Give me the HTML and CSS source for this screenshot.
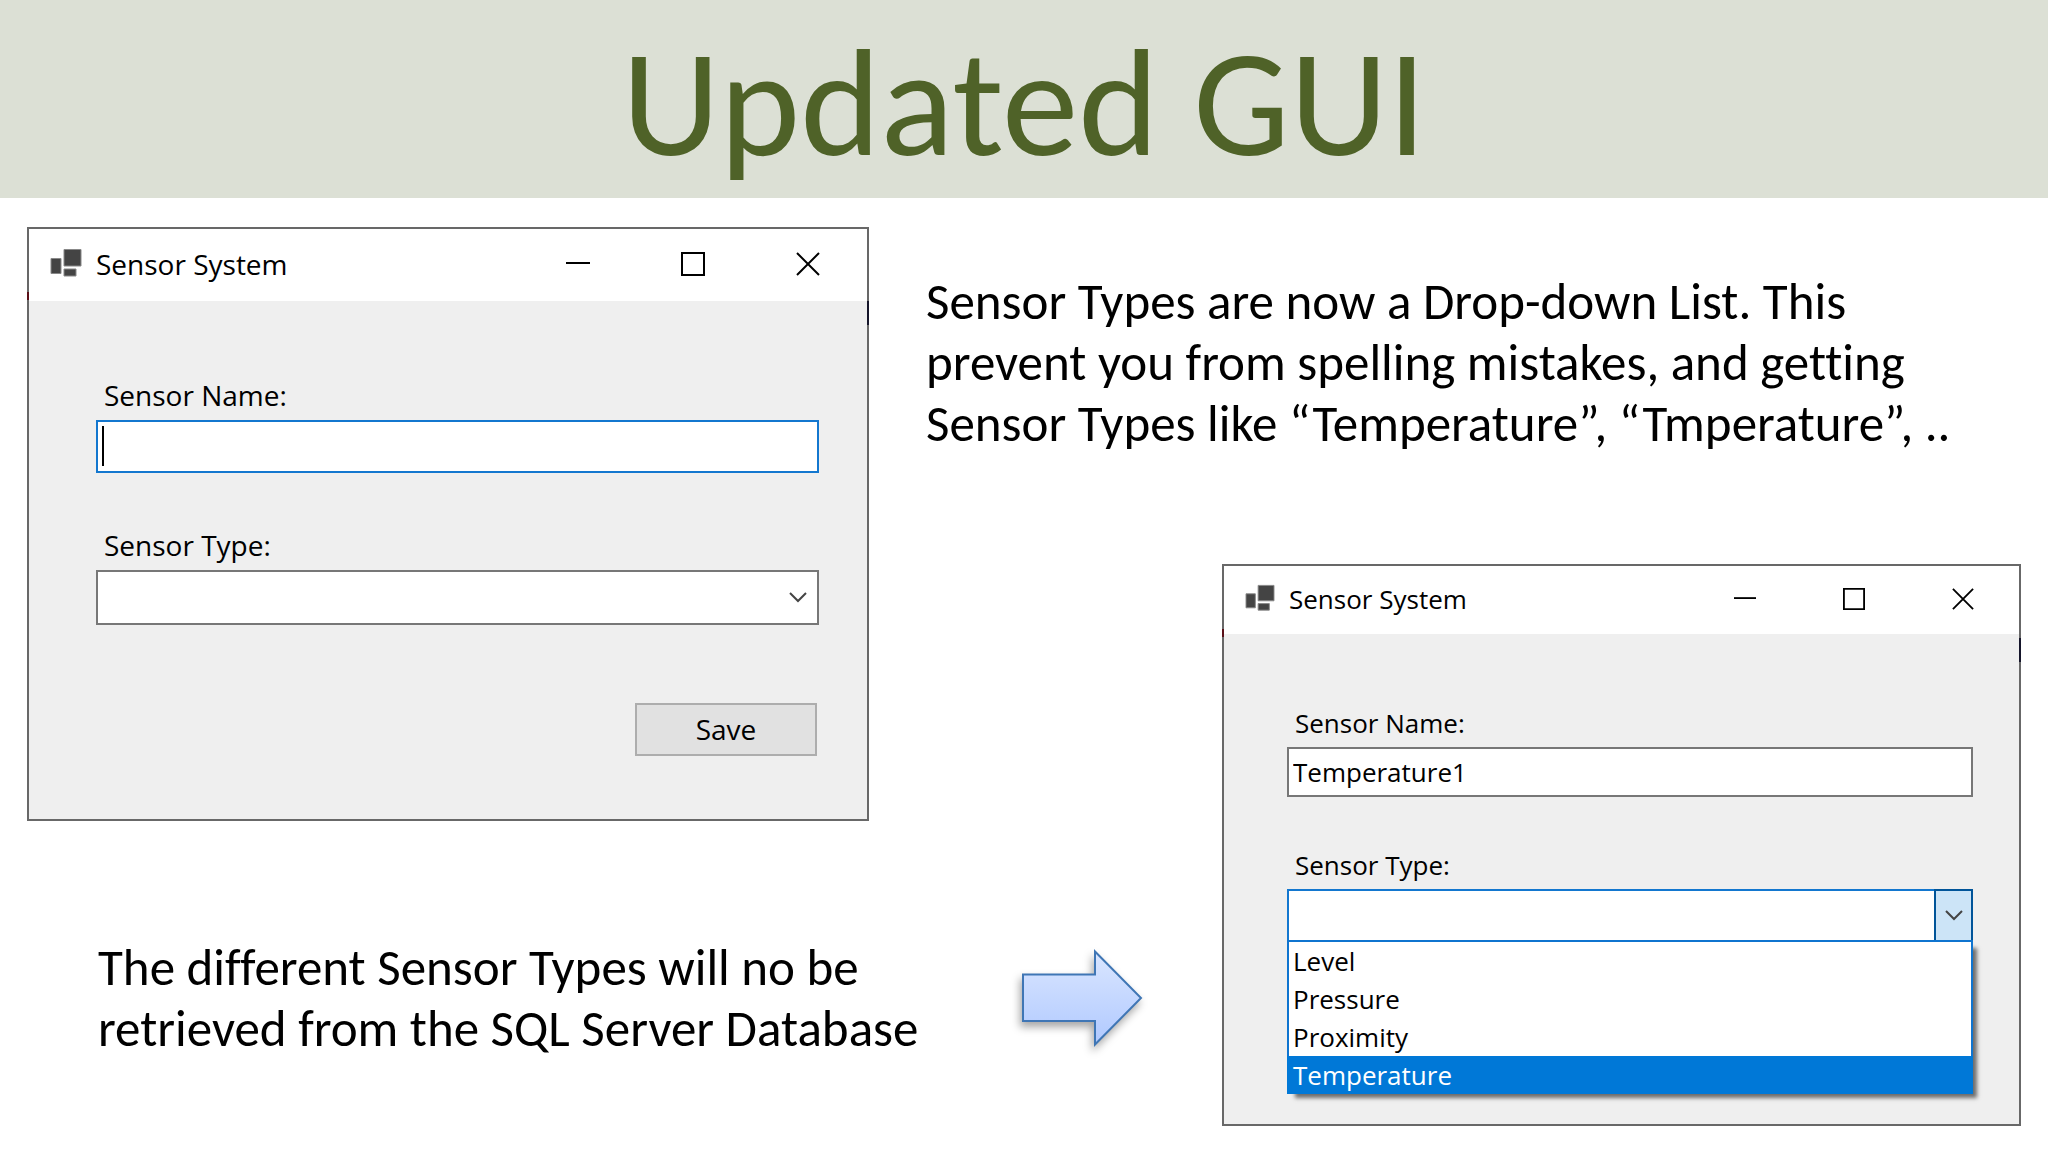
FILE: index.html
```html
<!DOCTYPE html>
<html lang="en">
<head>
<meta charset="utf-8">
<title>Updated GUI</title>
<link rel="stylesheet" href="styles.css">
</head>
<body>
<header class="banner"><h1>Updated GUI</h1></header>
<main class="slide">
  <section class="window window-first">
    <div class="titlebar">
      <svg class="app-icon" viewBox="0 0 32 30" aria-hidden="true"><g fill="#444" stroke="#888" stroke-width="1"><path d="M1 10.500h10v15H1zM14 21h12v7H14zM14 1.500h17v16.500H14z"/></g></svg>
      <h2>Sensor System</h2>
      <button class="caption" aria-label="Minimize"><svg viewBox="0 0 24 24"><path d="M0 11h24"/></svg></button>
      <button class="caption" aria-label="Maximize"><svg viewBox="0 0 24 24"><path d="M1 1h22v22H1z"/></svg></button>
      <button class="caption" aria-label="Close"><svg viewBox="0 0 24 24"><path d="M1 1l22 22M23 1L1 23"/></svg></button>
    </div>
    <form class="form">
      <label for="name1">Sensor Name:</label>
      <div class="field focused"><input id="name1" type="text"><span class="caret"></span></div>
      <label for="type1">Sensor Type:</label>
      <div class="field combo">
        <select id="type1"><option></option><option>Level</option><option>Pressure</option><option>Proximity</option><option>Temperature</option></select>
        <span class="drop"><svg viewBox="0 0 18 11"><path d="M1 1l8 8 8-8"/></svg></span>
      </div>
      <button class="save" type="button">Save</button>
    </form>
  </section>

  <p class="note note-top">Sensor Types are now a Drop-down List. This<br>prevent you from spelling mistakes, and getting<br>Sensor Types like “Temperature”, “Tmperature”, ..</p>

  <div class="bottom">
    <p class="note">The different Sensor Types will no be<br>retrieved from the SQL Server Database</p>
    <svg class="arrow" viewBox="0 0 122 98" aria-hidden="true">
      <defs><linearGradient id="sky" x1="0" y1="0" x2="0" y2="1"><stop offset="0" stop-color="#dae6ff"/><stop offset="1" stop-color="#b0c9ff"/></linearGradient></defs>
      <path d="M2 25.500h72V2.500L120 49 74 95.500V72H2z" fill="url(#sky)" stroke="#3f76b5" stroke-width="2"/>
    </svg>
  </div>

  <section class="window window-second">
    <div class="titlebar">
      <svg class="app-icon" viewBox="0 0 32 30" aria-hidden="true"><g fill="#444" stroke="#888" stroke-width="1"><path d="M1 10.500h10v15H1zM14 21h12v7H14zM14 1.500h17v16.500H14z"/></g></svg>
      <h2>Sensor System</h2>
      <button class="caption" aria-label="Minimize"><svg viewBox="0 0 24 24"><path d="M0 11h24"/></svg></button>
      <button class="caption" aria-label="Maximize"><svg viewBox="0 0 24 24"><path d="M1 1h22v22H1z"/></svg></button>
      <button class="caption" aria-label="Close"><svg viewBox="0 0 24 24"><path d="M1 1l22 22M23 1L1 23"/></svg></button>
    </div>
    <form class="form">
      <label for="name2">Sensor Name:</label>
      <div class="field"><input id="name2" type="text" value="Temperature1"></div>
      <label for="type2">Sensor Type:</label>
      <div class="field combo open">
        <select id="type2"><option></option></select>
        <span class="drop"><svg viewBox="0 0 18 11"><path d="M1 1l8 8 8-8"/></svg></span>
        <ul class="options" role="listbox" aria-label="Sensor Type">
          <li role="option">Level</li>
          <li role="option">Pressure</li>
          <li role="option">Proximity</li>
          <li role="option" aria-selected="true">Temperature</li>
        </ul>
      </div>
    </form>
  </section>
</main>
</body>
</html>
```
FILE: styles.css
```css
* { box-sizing: border-box; }

body {
  margin: 0;
  background: #fff;
  color: #000;
  font-family: Calibri, Carlito, Lato, sans-serif;
  font-variant-ligatures: none;
}

h1, h2, p, ul { margin: 0; padding: 0; font-weight: 400; }

.banner {
  display: flex;
  align-items: center;
  justify-content: center;
  height: 198px;
  padding-top: 8px;
  background: #dce0d5;
}

.banner h1 { color: #4f6228; font-size: 153px; line-height: 180px; }

.slide {
  display: grid;
  grid-template-columns: 842fr 239fr 799fr;
  grid-template-rows: 337px 257px auto;
  column-gap: 57px;
  padding: 29px 27px 26px;
}

.note { font-size: 51px; line-height: 61px; white-space: nowrap; }

.note-top { grid-area: 1 / 2 / 2 / 4; padding-top: 44px; }

.bottom {
  grid-area: 3 / 1 / 4 / 3;
  display: flex;
  align-items: center;
  justify-content: space-between;
  padding: 48px 22px 0 71px;
}

.arrow {
  width: 122px;
  height: 98px;
  overflow: visible;
  filter: drop-shadow(-2px 5px 4px rgba(0, 0, 0, 0.35));
}

/* Desktop windows */
.window {
  --text: 28px;
  --label: 40px;
  --field: 53px;
  --caption: 115px;
  position: relative;
  border: 2px solid #686868;
  background: #efefef;
  font-family: "Segoe UI", "Open Sans", "Noto Sans", sans-serif;
  font-size: var(--text);
}

.window::before,
.window::after {
  content: "";
  position: absolute;
  width: 2px;
}

.window::before { left: -2px; top: 63px; height: 8px; background: #5a1018; }
.window::after { right: -2px; top: 72px; height: 24px; background: #15152a; }

.window-first { grid-area: 1 / 1 / 3 / 2; }

.window-second {
  --text: 26px;
  --label: 38px;
  --field: 50px;
  --caption: 109px;
  grid-area: 2 / 3 / 4 / 4;
}

.titlebar {
  display: flex;
  align-items: center;
  height: 72px;
  padding: 0 2px 2px 21px;
  background: #fff;
}

.window-second .titlebar { height: 68px; }

.app-icon { width: 32px; height: 30px; margin-bottom: 2px; }
.window-second .app-icon { width: 30px; height: 28px; }

.titlebar h2 { flex: 1; padding-left: 14px; font-size: inherit; line-height: 40px; }

.caption {
  display: flex;
  align-items: center;
  justify-content: center;
  width: var(--caption);
  height: 100%;
  padding: 0;
  border: 0;
  background: none;
}

.caption svg { width: 24px; height: 24px; fill: none; stroke: #000; stroke-width: 2; }
.window-second .caption svg { width: 22px; height: 22px; }

.form {
  display: flex;
  flex-direction: column;
  padding: 74px 48px 63px 67px;
}

.window-second .form { padding: 70px 46px 182px 63px; }

.form label { padding-left: 8px; line-height: var(--label); margin-bottom: 5px; }

.field {
  position: relative;
  display: flex;
  height: var(--field);
  border: 2px solid #777;
  background: #fff;
}

.field + label { margin-top: 52px; }
.window-second .field + label { margin-top: 49px; }

.focused { border-color: #1377cf; }

.field input,
.field select {
  flex: 1;
  min-width: 0;
  padding: 0 4px;
  border: 0;
  outline: 0;
  appearance: none;
  background: none;
  color: #000;
  font: inherit;
}

.caret {
  position: absolute;
  left: 4px;
  top: 4px;
  width: 2px;
  height: 40px;
  background: #000;
}

.combo { height: calc(var(--field) + 2px); }

.drop {
  display: flex;
  align-items: center;
  justify-content: center;
  width: 39px;
  pointer-events: none;
}

.drop svg { width: 18px; height: 11px; fill: none; stroke: #444; stroke-width: 2; }

.open { height: calc(var(--field) + 3px); border-color: #1377cf; }

.open .drop { margin: -2px; border: 2px solid #005499; background: #cce4f7; }

.options {
  position: absolute;
  left: -2px;
  right: -2px;
  top: 100%;
  border: 2px solid #0f74cf;
  border-bottom: 0;
  background: #fff;
  box-shadow: 6px 6px 4px -2px rgba(0, 0, 0, 0.55);
  list-style: none;
}

.options li { padding: 1px 0 0 4px; line-height: 37px; }
.options li[aria-selected="true"] { margin: 0 -2px; padding-left: 6px; background: #0078d7; color: #fff; }

.save {
  align-self: flex-end;
  width: 182px;
  height: 53px;
  margin: 78px 2px 0 0;
  padding: 0 0 2px;
  border: 2px solid #adadad;
  background: #e1e1e1;
  color: #000;
  font: inherit;
}
```
